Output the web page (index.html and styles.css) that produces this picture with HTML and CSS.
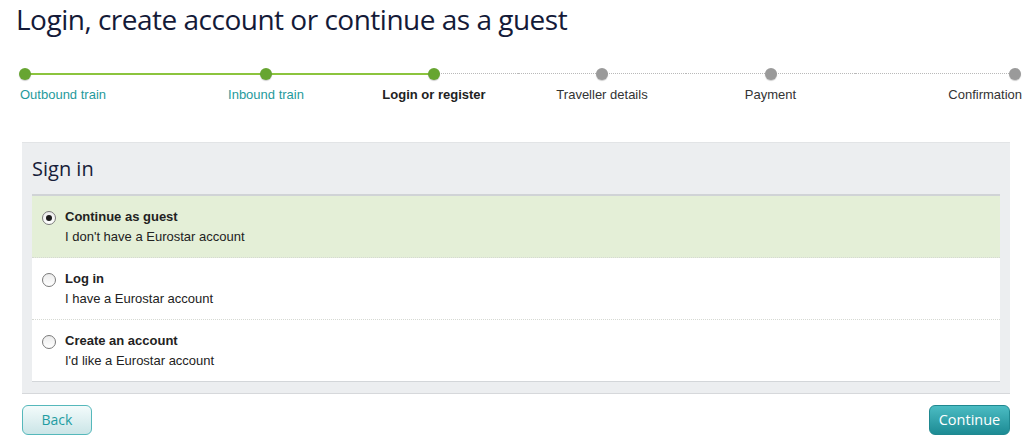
FILE: index.html
```html
<!DOCTYPE html>
<html lang="en">
<head>
<meta charset="utf-8">
<title>Login, create account or continue as a guest</title>
<link rel="stylesheet" href="styles.css">
</head>
<body>
<h1 class="title">Login, create account or continue as a guest</h1>

<ol class="stepper">
  <li class="step first done"><span class="dot"></span><span class="label">Outbound train</span></li>
  <li class="step done"><span class="dot"></span><span class="label">Inbound train</span></li>
  <li class="step current"><span class="dot"></span><span class="label">Login or register</span></li>
  <li class="step"><span class="dot"></span><span class="label">Traveller details</span></li>
  <li class="step"><span class="dot"></span><span class="label">Payment</span></li>
  <li class="step last"><span class="dot"></span><span class="label">Confirmation</span></li>
</ol>

<section class="panel">
  <h2 class="panel-title">Sign in</h2>
  <div class="options">
    <label class="option selected">
      <span class="radio checked"></span>
      <span class="option-text">
        <span class="option-name">Continue as guest</span>
        <span class="option-desc">I don't have a Eurostar account</span>
      </span>
    </label>
    <label class="option">
      <span class="radio"></span>
      <span class="option-text">
        <span class="option-name">Log in</span>
        <span class="option-desc">I have a Eurostar account</span>
      </span>
    </label>
    <label class="option">
      <span class="radio"></span>
      <span class="option-text">
        <span class="option-name">Create an account</span>
        <span class="option-desc">I'd like a Eurostar account</span>
      </span>
    </label>
  </div>
</section>

<div class="actions">
  <button class="btn btn-back" type="button">Back</button>
  <button class="btn btn-continue" type="button">Continue</button>
</div>
</body>
</html>
```

FILE: styles.css
```css
* { box-sizing: border-box; }

body {
  margin: 0;
  background: #ffffff;
  font-family: "Liberation Sans", Arial, sans-serif;
  color: #222;
}

.title {
  margin: 0;
  padding: 0 0 0 16px;
  font-family: "Open Sans", "Noto Sans", sans-serif;
  font-weight: 400;
  font-size: 28px;
  line-height: 38px;
  color: #141a38;
  letter-spacing: -0.5px;
}

/* Stepper */
.stepper {
  list-style: none;
  margin: 30px 0 0 0;
  padding: 0 2px 0 16px;
  display: grid;
  grid-template-columns: 166px 168px 168px 168px 169px 1fr;
}

.step {
  position: relative;
  display: flex;
  flex-direction: column;
  align-items: center;
}

.step.first { align-items: flex-start; }
.step.last { align-items: flex-end; }

.step::before,
.step::after {
  content: "";
  position: absolute;
  top: 5px;
  height: 0;
  border-top: 1px dotted #b9b9b9;
}

.step::before { left: 0; right: 50%; }
.step::after { left: 50%; right: 0; }

.step.first::before { display: none; }
.step.first::after { left: 9px; }
.step.last::after { display: none; }
.step.last::before { right: 7px; }

.step.done::before,
.step.done::after,
.step.current::before {
  top: 5px;
  border-top: 2px solid #8cc43e;
}

.dot {
  position: relative;
  z-index: 1;
  width: 12px;
  height: 12px;
  border-radius: 50%;
  background: #9a9a9a;
  box-shadow: 0 1px 1px rgba(0, 0, 0, 0.2);
}

.step.first .dot { margin-left: 3px; }
.step.last .dot { margin-right: 1px; }

.step.done .dot,
.step.current .dot {
  background: #67a531;
}

.label {
  margin-top: 7px;
  font-size: 13px;
  line-height: 16px;
  color: #333;
  white-space: nowrap;
}

.step.first .label { margin-left: 4px; }

.step.done .label { color: #1f9a9c; }
.step.current .label { color: #222; font-weight: 700; }

/* Panel */
.panel {
  margin: 39px 14px 0 22px;
  padding: 0 10px 11px 10px;
  background: #eceef0;
  border-top: 1px solid #e2e4e6;
  border-bottom: 1px solid #d6d8db;
}

.panel-title {
  margin: 0;
  padding: 14px 0 13px 0;
  font-family: "Open Sans", "Noto Sans", sans-serif;
  font-weight: 400;
  font-size: 20px;
  line-height: 24px;
  color: #171d3a;
}

.options {
  background: #ffffff;
  border-top: 2px solid #d0d3d6;
  border-bottom: 1px solid #d3d6d9;
}

.option {
  display: flex;
  align-items: flex-start;
  gap: 9px;
  padding: 11px 10px 11px 10px;
  height: 62px;
  border-bottom: 1px dotted #d6d9d3;
  cursor: pointer;
}

.option:last-child { border-bottom: none; height: 61px; }

.option.selected { background: #e4efd7; }

.radio {
  flex: none;
  width: 14px;
  height: 14px;
  margin-top: 4px;
  border-radius: 50%;
  border: 1px solid #7a7a7a;
  background: linear-gradient(#ececec, #ffffff);
  display: flex;
  align-items: center;
  justify-content: center;
}

.radio.checked::after {
  content: "";
  width: 6px;
  height: 6px;
  border-radius: 50%;
  background: #1b1b1b;
}

.option-text {
  display: flex;
  flex-direction: column;
  font-size: 13px;
  line-height: 20px;
  color: #222;
}

.option-name { font-weight: 700; }

/* Actions */
.actions {
  display: flex;
  justify-content: space-between;
  margin: 11px 14px 0 22px;
}

.btn {
  height: 30px;
  border-radius: 6px;
  font-family: "Open Sans", "Noto Sans", sans-serif;
  font-size: 14px;
  line-height: 28px;
  padding: 0;
  cursor: pointer;
}

.btn-back {
  width: 70px;
  border: 1px solid #55b8bb;
  background: linear-gradient(#f3fbfb, #cbe5e7);
  color: #1f9da2;
}

.btn-continue {
  width: 81px;
  border: 1px solid #1f8890;
  background: linear-gradient(#4bbcc3, #1d8b94);
  color: #ffffff;
  font-size: 14.5px;
}
```
